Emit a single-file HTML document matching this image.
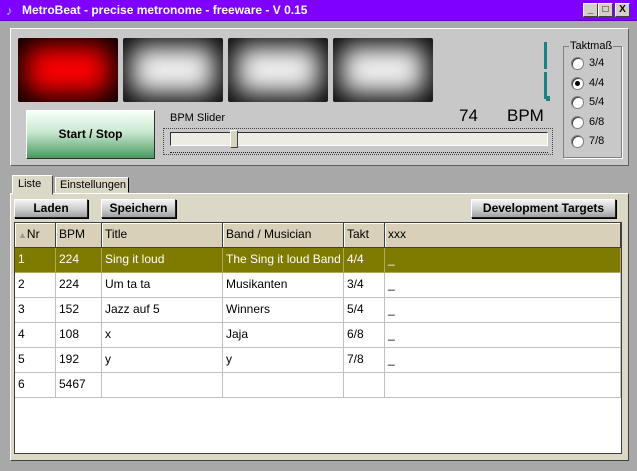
<!DOCTYPE html>
<html><head><meta charset="utf-8"><style>
*{margin:0;padding:0;box-sizing:border-box}
body{width:637px;height:471px;overflow:hidden;background:#a8a8a8;font-family:"Liberation Sans",sans-serif;font-size:12px;position:relative}
.a{position:absolute}
.title{left:0;top:0;width:637px;height:21px;background:#8000ff;color:#fff;font-weight:bold;font-size:12px;line-height:21px;padding-left:22px;border-bottom:1px solid #6000c0}
.tb{top:3px;width:15px;height:14px;background:#d4d0c8;border:1px solid;border-color:#fff #404040 #404040 #fff;color:#000;font-size:10px;line-height:12px;text-align:center;font-weight:bold}
.light{top:38px;width:100px;height:64px;border-radius:2px;background:#f4f4f4;box-shadow:inset 0 0 26px 8px #000}
.red{background:#f00;box-shadow:inset 0 0 26px 8px #000}
.btn{height:19px;background:linear-gradient(#f4f4f4,#c8c8c8 60%,#a0a0a0);border:1px solid;border-color:#fff #202020 #202020 #fff;font-weight:bold;font-size:12px;text-align:center;line-height:17px;box-shadow:1px 1px 0 #000}
.cell{position:absolute;height:25px;line-height:22px;padding-left:3px;border-right:1px solid #c0c0c0;border-bottom:1px solid #c0c0c0;white-space:nowrap;overflow:hidden;font-size:12px}
.rad{left:571px;width:13px;height:13px;border-radius:50%;background:#fff;border:1px solid #808080;box-shadow:inset 1px 1px 0 #404040}
.rl{left:589px;font-size:11px}
</style></head><body>
<div class="a title">MetroBeat - precise metronome - freeware -  V 0.15</div>
<div class="a" style="left:6px;top:3px;color:#9cf;font-size:13px">♪</div>
<div class="a tb" style="left:583px">_</div>
<div class="a tb" style="left:598px">□</div>
<div class="a tb" style="left:615px">X</div>

<div class="a" style="left:10px;top:28px;width:619px;height:138px;background:#c8c8c8;border:1px solid;border-color:#fff #606060 #606060 #fff"></div>
<div class="a light red" style="left:18px"></div>
<div class="a light" style="left:123px"></div>
<div class="a light" style="left:228px"></div>
<div class="a light" style="left:333px"></div>
<div class="a" style="left:544px;top:42px;width:3px;height:27px;background:#208080"></div>
<div class="a" style="left:544px;top:72px;width:3px;height:27px;background:#208080"></div>
<div class="a" style="left:546px;top:96px;width:4px;height:5px;background:#208080"></div>

<div class="a" style="left:26px;top:110px;width:129px;height:49px;background:linear-gradient(#f8fff8,#c8e8d0 45%,#4a9a60);border:1px solid;border-color:#fff #303030 #303030 #fff;font-weight:bold;text-align:center;line-height:47px">Start / Stop</div>
<div class="a" style="left:170px;top:112px;font-size:11px">BPM Slider</div>
<div class="a" style="left:459px;top:106px;font-size:17px">74</div>
<div class="a" style="left:507px;top:106px;font-size:17px">BPM</div>
<div class="a" style="left:163px;top:128px;width:390px;height:27px;border:1px dotted #444"></div>
<div class="a" style="left:170px;top:132px;width:378px;height:14px;background:#ecebe4;border:1px solid;border-color:#303030 #fff #fff #303030"></div>
<div class="a" style="left:230px;top:130px;width:8px;height:18px;background:#d8d2c0;border:1px solid;border-color:#fff #404040 #404040 #fff"></div>
<div class="a" style="left:170px;top:152px;width:378px;height:2px;border-top:1px dotted #222"></div>

<div class="a" style="left:563px;top:46px;width:59px;height:112px;border:1px solid #808080;box-shadow:1px 1px 0 #fff"></div>
<div class="a" style="left:569px;top:40px;background:#c8c8c8;font-size:11px;padding:0 1px">Taktmaß</div>
<div class="a rad" style="top:57px"></div><div class="a rl" style="top:57px">3/4</div>
<div class="a rad" style="top:77px"></div><div class="a" style="left:575px;top:81px;width:5px;height:5px;border-radius:50%;background:#000"></div><div class="a rl" style="top:77px">4/4</div>
<div class="a rad" style="top:96px"></div><div class="a rl" style="top:96px">5/4</div>
<div class="a rad" style="top:116px"></div><div class="a rl" style="top:116px">6/8</div>
<div class="a rad" style="top:135px"></div><div class="a rl" style="top:135px">7/8</div>

<div class="a" style="left:10px;top:193px;width:619px;height:268px;background:#dcd8c8;border:1px solid;border-color:#fff #404040 #404040 #fff"></div>
<div class="a" style="left:12px;top:175px;width:41px;height:20px;background:#dcd8c8;border:1px solid;border-color:#fff #404040 transparent #fff;font-size:11px;padding:2px 0 0 5px">Liste</div>
<div class="a" style="left:55px;top:177px;width:74px;height:16px;background:#dcd8c8;border:1px solid;border-color:#fff #000 transparent #fff;font-size:11px;padding:1px 0 0 4px">Einstellungen</div>
<div class="a btn" style="left:14px;top:199px;width:74px">Laden</div>
<div class="a btn" style="left:101px;top:199px;width:75px">Speichern</div>
<div class="a btn" style="left:471px;top:199px;width:145px">Development Targets</div>

<div class="a" style="left:14px;top:222px;width:608px;height:232px;background:#fff;border:1px solid #404040"></div>
<div class="a" style="left:15px;top:223px;width:606px;height:25px;background:#d8d0b8"></div>
<div class="a" style="left:15px;top:248px;width:606px;height:24px;background:#7f7a00"></div>
<div id="g"></div>
<script>
var cols=[15,56,102,223,344,385,621];
var rows=[["<span style='color:#999;font-size:9px'>▲</span>Nr","BPM","Title","Band / Musician","Takt","xxx"],
["1","224","Sing it loud","The Sing it loud Band","4/4","_"],
["2","224","Um ta ta","Musikanten","3/4","_"],
["3","152","Jazz auf 5","Winners","5/4","_"],
["4","108","x","Jaja","6/8","_"],
["5","192","y","y","7/8","_"],
["6","5467","","","",""]];
var h="";
for(var r=0;r<rows.length;r++){for(var c=0;c<6;c++){
var st="left:"+cols[c]+"px;top:"+(223+r*25)+"px;width:"+(cols[c+1]-cols[c])+"px;";
if(r==0)st+="border-right:1px solid #404040;border-bottom:1px solid #404040;box-shadow:inset 1px 1px 0 #fff;";
if(r==1)st+="color:#fff;border-color:#b0a860;";
h+="<div class='cell' style='"+st+"'>"+rows[r][c]+"</div>";}}
document.getElementById("g").innerHTML=h;
</script>
</body></html>
